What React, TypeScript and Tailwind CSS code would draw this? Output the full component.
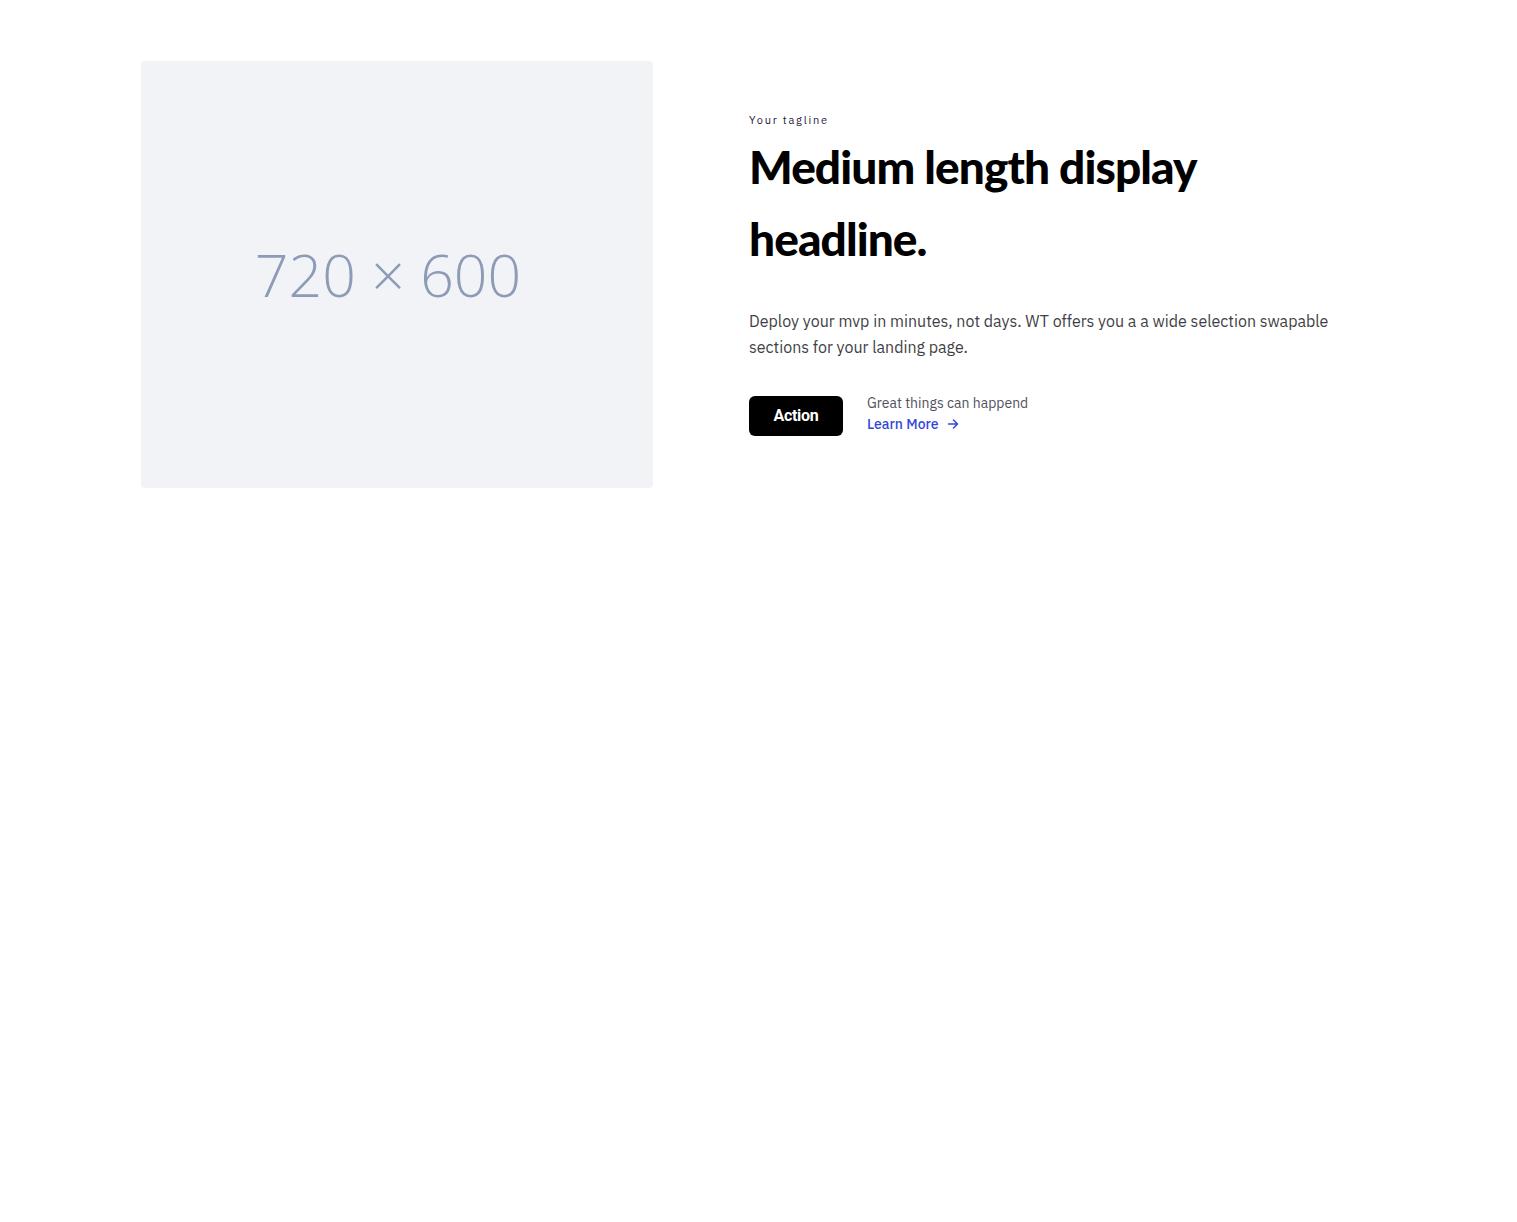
import React from "react";

export default function App() {
  return (
    <div className="min-h-[1222px] bg-white" style={{ fontFamily: "'IBM Plex Sans', 'Noto Sans', Roboto, sans-serif" }}>
      <div className="flex items-center pl-[141px] pt-[61px]">
        <div className="flex h-[427px] w-[512px] shrink-0 items-center justify-center rounded bg-[#f1f3f7]">
          <span
            className="mr-[18px] text-[59px] font-light text-[#8d9bb6]"
            style={{ fontFamily: "'Open Sans', sans-serif" }}
          >
            720 × 600
          </span>
        </div>
        <div className="ml-[96px] w-[620px]">
          <p className="text-[11px] leading-[14px] tracking-[0.16em] text-[#1b1b3a]">Your tagline</p>
          <h1
            className="mt-[4px] text-[46px] font-black leading-[72px] tracking-[-0.02em] text-black"
            style={{ fontFamily: "Lato, sans-serif" }}
          >
            Medium length display
            <br />
            headline.
          </h1>
          <p className="mt-[33px] w-[600px] text-[16px] leading-[26px] text-[#3f3f46]">
            Deploy your mvp in minutes, not days. WT offers you a a wide selection swapable sections for your landing page.
          </p>
          <div className="mt-[36px] flex items-start gap-6">
            <button
              className="h-10 w-[94px] rounded-md bg-black text-[16px] font-bold tracking-[-0.02em] text-white"
              style={{ fontFamily: "Roboto, sans-serif" }}
            >
              Action
            </button>
            <div className="-mt-[2px] flex flex-col">
              <span className="text-[14px] leading-[18px] text-[#52525b]">Great things can happend</span>
              <a href="#" className="mt-[3px] flex items-center gap-[8px] text-[14px] font-medium leading-[18px] text-[#3347d6]">
                Learn More
                <svg width="12" height="12" viewBox="0 0 12 12" fill="none" stroke="currentColor" strokeWidth="1.5" strokeLinecap="round" strokeLinejoin="round">
                  <path d="M1.5 6h9M6.5 2l4 4-4 4" />
                </svg>
              </a>
            </div>
          </div>
        </div>
      </div>
    </div>
  );
}
